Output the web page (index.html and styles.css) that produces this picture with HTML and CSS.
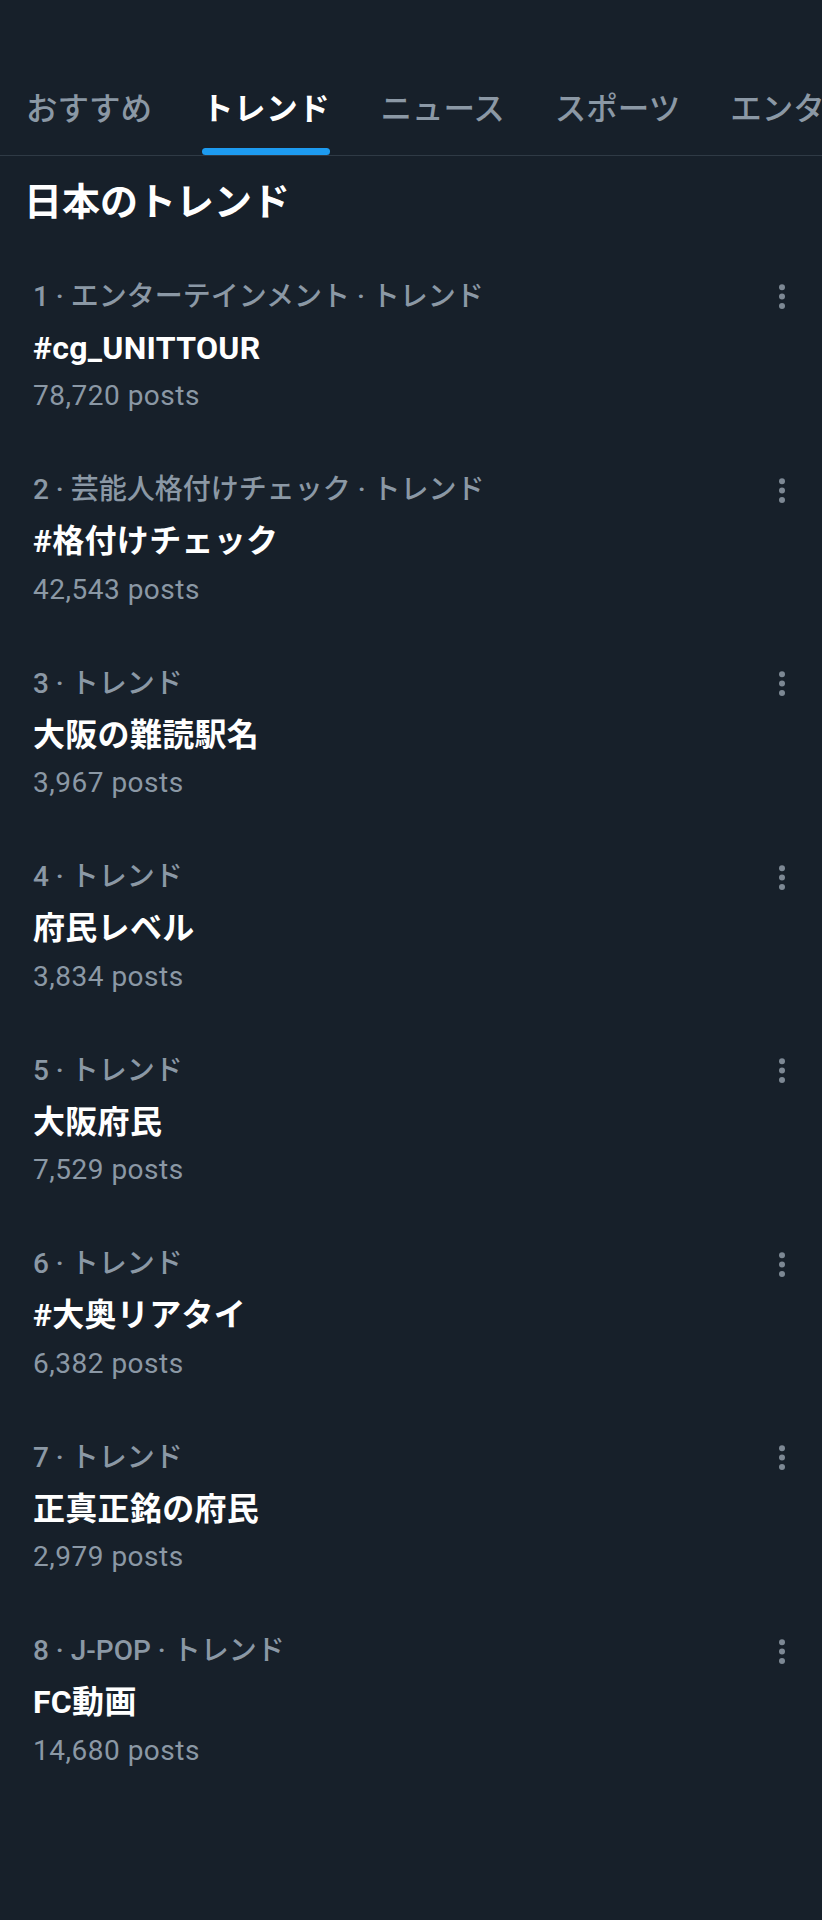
FILE: index.html
```html
<!DOCTYPE html>
<html lang="ja">
<head>
  <meta charset="UTF-8" />
  <meta name="viewport" content="width=device-width, initial-scale=1.0"/>
  <title>トレンド</title>
  <link rel="stylesheet" href="styles.css">
</head>
<body>

  <!-- Tabs -->
  <nav class="tabs">
    <div class="tab"><span>おすすめ</span></div>
    <div class="tab active"><span>トレンド</span><i class="bar"></i></div>
    <div class="tab"><span>ニュース</span></div>
    <div class="tab"><span>スポーツ</span></div>
    <div class="tab"><span>エンタメ</span></div>
  </nav>

  <h2 class="title">日本のトレンド</h2>

  <div class="trends">
    <div class="trend">
      <div class="meta"><span>1 · エンターテインメント · トレンド</span><svg class="more" viewBox="0 0 6 25"><circle cx="3" cy="3.3" r="3"/><circle cx="3" cy="12.6" r="3"/><circle cx="3" cy="21.9" r="3"/></svg></div>
      <div class="name">#cg_UNITTOUR</div>
      <div class="count">78,720 posts</div>
    </div>
    <div class="trend">
      <div class="meta"><span>2 · 芸能人格付けチェック · トレンド</span><svg class="more" viewBox="0 0 6 25"><circle cx="3" cy="3.3" r="3"/><circle cx="3" cy="12.6" r="3"/><circle cx="3" cy="21.9" r="3"/></svg></div>
      <div class="name">#格付けチェック</div>
      <div class="count">42,543 posts</div>
    </div>
    <div class="trend">
      <div class="meta"><span>3 · トレンド</span><svg class="more" viewBox="0 0 6 25"><circle cx="3" cy="3.3" r="3"/><circle cx="3" cy="12.6" r="3"/><circle cx="3" cy="21.9" r="3"/></svg></div>
      <div class="name">大阪の難読駅名</div>
      <div class="count">3,967 posts</div>
    </div>
    <div class="trend">
      <div class="meta"><span>4 · トレンド</span><svg class="more" viewBox="0 0 6 25"><circle cx="3" cy="3.3" r="3"/><circle cx="3" cy="12.6" r="3"/><circle cx="3" cy="21.9" r="3"/></svg></div>
      <div class="name">府民レベル</div>
      <div class="count">3,834 posts</div>
    </div>
    <div class="trend">
      <div class="meta"><span>5 · トレンド</span><svg class="more" viewBox="0 0 6 25"><circle cx="3" cy="3.3" r="3"/><circle cx="3" cy="12.6" r="3"/><circle cx="3" cy="21.9" r="3"/></svg></div>
      <div class="name">大阪府民</div>
      <div class="count">7,529 posts</div>
    </div>
    <div class="trend">
      <div class="meta"><span>6 · トレンド</span><svg class="more" viewBox="0 0 6 25"><circle cx="3" cy="3.3" r="3"/><circle cx="3" cy="12.6" r="3"/><circle cx="3" cy="21.9" r="3"/></svg></div>
      <div class="name">#大奥リアタイ</div>
      <div class="count">6,382 posts</div>
    </div>
    <div class="trend">
      <div class="meta"><span>7 · トレンド</span><svg class="more" viewBox="0 0 6 25"><circle cx="3" cy="3.3" r="3"/><circle cx="3" cy="12.6" r="3"/><circle cx="3" cy="21.9" r="3"/></svg></div>
      <div class="name">正真正銘の府民</div>
      <div class="count">2,979 posts</div>
    </div>
    <div class="trend">
      <div class="meta"><span>8 · J-POP · トレンド</span><svg class="more" viewBox="0 0 6 25"><circle cx="3" cy="3.3" r="3"/><circle cx="3" cy="12.6" r="3"/><circle cx="3" cy="21.9" r="3"/></svg></div>
      <div class="name">FC動画</div>
      <div class="count">14,680 posts</div>
    </div>
  </div>

</body>
</html>
```

FILE: styles.css
```css
body {
  margin: 0;
  padding: 0;
  background: #17202a;
  color: #f7f9f9;
  font-family: Roboto, "Noto Sans CJK JP", sans-serif;
  overflow-x: hidden;
}

/* Tabs */
.tabs {
  display: flex;
  gap: 50px;
  padding: 90px 0 0 26px;
  border-bottom: 1px solid #2f3a45;
  overflow: hidden;
  white-space: nowrap;
}

.tab {
  display: flex;
  flex-direction: column;
  flex-shrink: 0;
  font-size: 31.5px;
  font-weight: 500;
  line-height: 40px;
  color: #8b98a5;
  padding-bottom: 25px;
}

.tab.active {
  color: #ffffff;
  font-weight: 700;
  letter-spacing: 0.6px;
  padding-bottom: 0;
}

.tab .bar {
  display: block;
  height: 7px;
  margin-top: 18px;
  border-radius: 4px;
  background: #1d9bf0;
}

.title {
  margin: 22px 0 24px;
  padding-left: 24px;
  font-size: 38px;
  line-height: 48px;
  font-weight: 700;
  color: #ffffff;
}

/* Trend rows */
.trend {
  padding: 29.5px 37px 29.5px 33px;
}

.meta {
  display: flex;
  justify-content: space-between;
  align-items: center;
  height: 34px;
  font-size: 28px;
  font-weight: 500;
  line-height: 34px;
  color: #8b98a5;
}

.more {
  width: 6px;
  height: 25px;
  fill: #7d8894;
}

.name {
  margin-top: 12px;
  font-size: 32px;
  line-height: 44px;
  font-weight: 700;
  letter-spacing: 0.3px;
  color: #ffffff;
}

.count {
  margin-top: 8.5px;
  font-size: 28px;
  line-height: 36px;
  letter-spacing: 0.5px;
  color: #8b98a5;
}
```
